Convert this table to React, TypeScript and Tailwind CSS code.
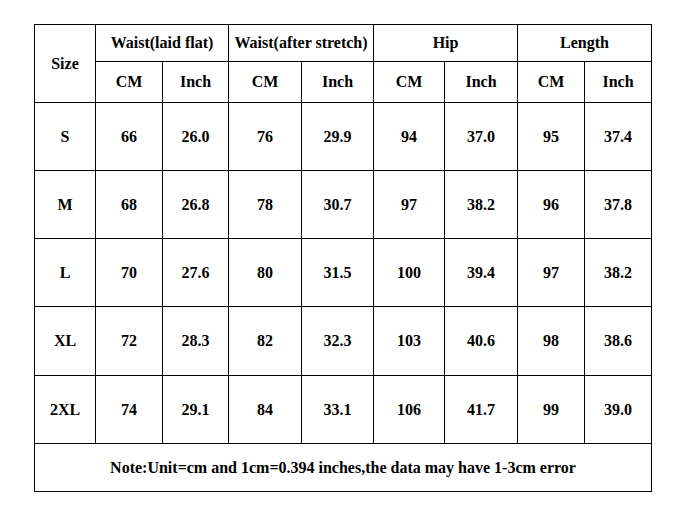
const rows = [
  ["S", "66", "26.0", "76", "29.9", "94", "37.0", "95", "37.4"],
  ["M", "68", "26.8", "78", "30.7", "97", "38.2", "96", "37.8"],
  ["L", "70", "27.6", "80", "31.5", "100", "39.4", "97", "38.2"],
  ["XL", "72", "28.3", "82", "32.3", "103", "40.6", "98", "38.6"],
  ["2XL", "74", "29.1", "84", "33.1", "106", "41.7", "99", "39.0"],
];

const rowHeights = ["h-[68px]", "h-[68px]", "h-[68px]", "h-[69px]", "h-[68px]"];

const cell = "border border-black text-center align-middle p-0";

export default function App() {
  return (
    <div className="w-[687px] h-[523px] bg-white pt-[24px] pl-[34px] text-black font-bold text-[16px] font-['Liberation_Serif',serif]">
      <table className="table-fixed border-collapse w-[617px]">
        <colgroup>
          <col className="w-[61px]" />
          <col className="w-[67px]" />
          <col className="w-[66px]" />
          <col className="w-[73px]" />
          <col className="w-[72px]" />
          <col className="w-[71px]" />
          <col className="w-[73px]" />
          <col className="w-[67px]" />
          <col className="w-[67px]" />
        </colgroup>
        <tbody>
          <tr className="h-[37px]">
            <td rowSpan={2} className={cell}>
              Size
            </td>
            <td colSpan={2} className={cell}>
              Waist(laid flat)
            </td>
            <td colSpan={2} className={cell}>
              Waist(after stretch)
            </td>
            <td colSpan={2} className={cell}>
              Hip
            </td>
            <td colSpan={2} className={cell}>
              Length
            </td>
          </tr>
          <tr className="h-[41px]">
            {["CM", "Inch", "CM", "Inch", "CM", "Inch", "CM", "Inch"].map((t, i) => (
              <td key={i} className={cell}>
                {t}
              </td>
            ))}
          </tr>
          {rows.map((r, i) => (
            <tr key={r[0]} className={rowHeights[i]}>
              {r.map((v, j) => (
                <td key={j} className={cell}>
                  {v}
                </td>
              ))}
            </tr>
          ))}
          <tr className="h-[48px]">
            <td colSpan={9} className={cell}>
              Note:Unit=cm and 1cm=0.394 inches,the data may have 1-3cm error
            </td>
          </tr>
        </tbody>
      </table>
    </div>
  );
}
